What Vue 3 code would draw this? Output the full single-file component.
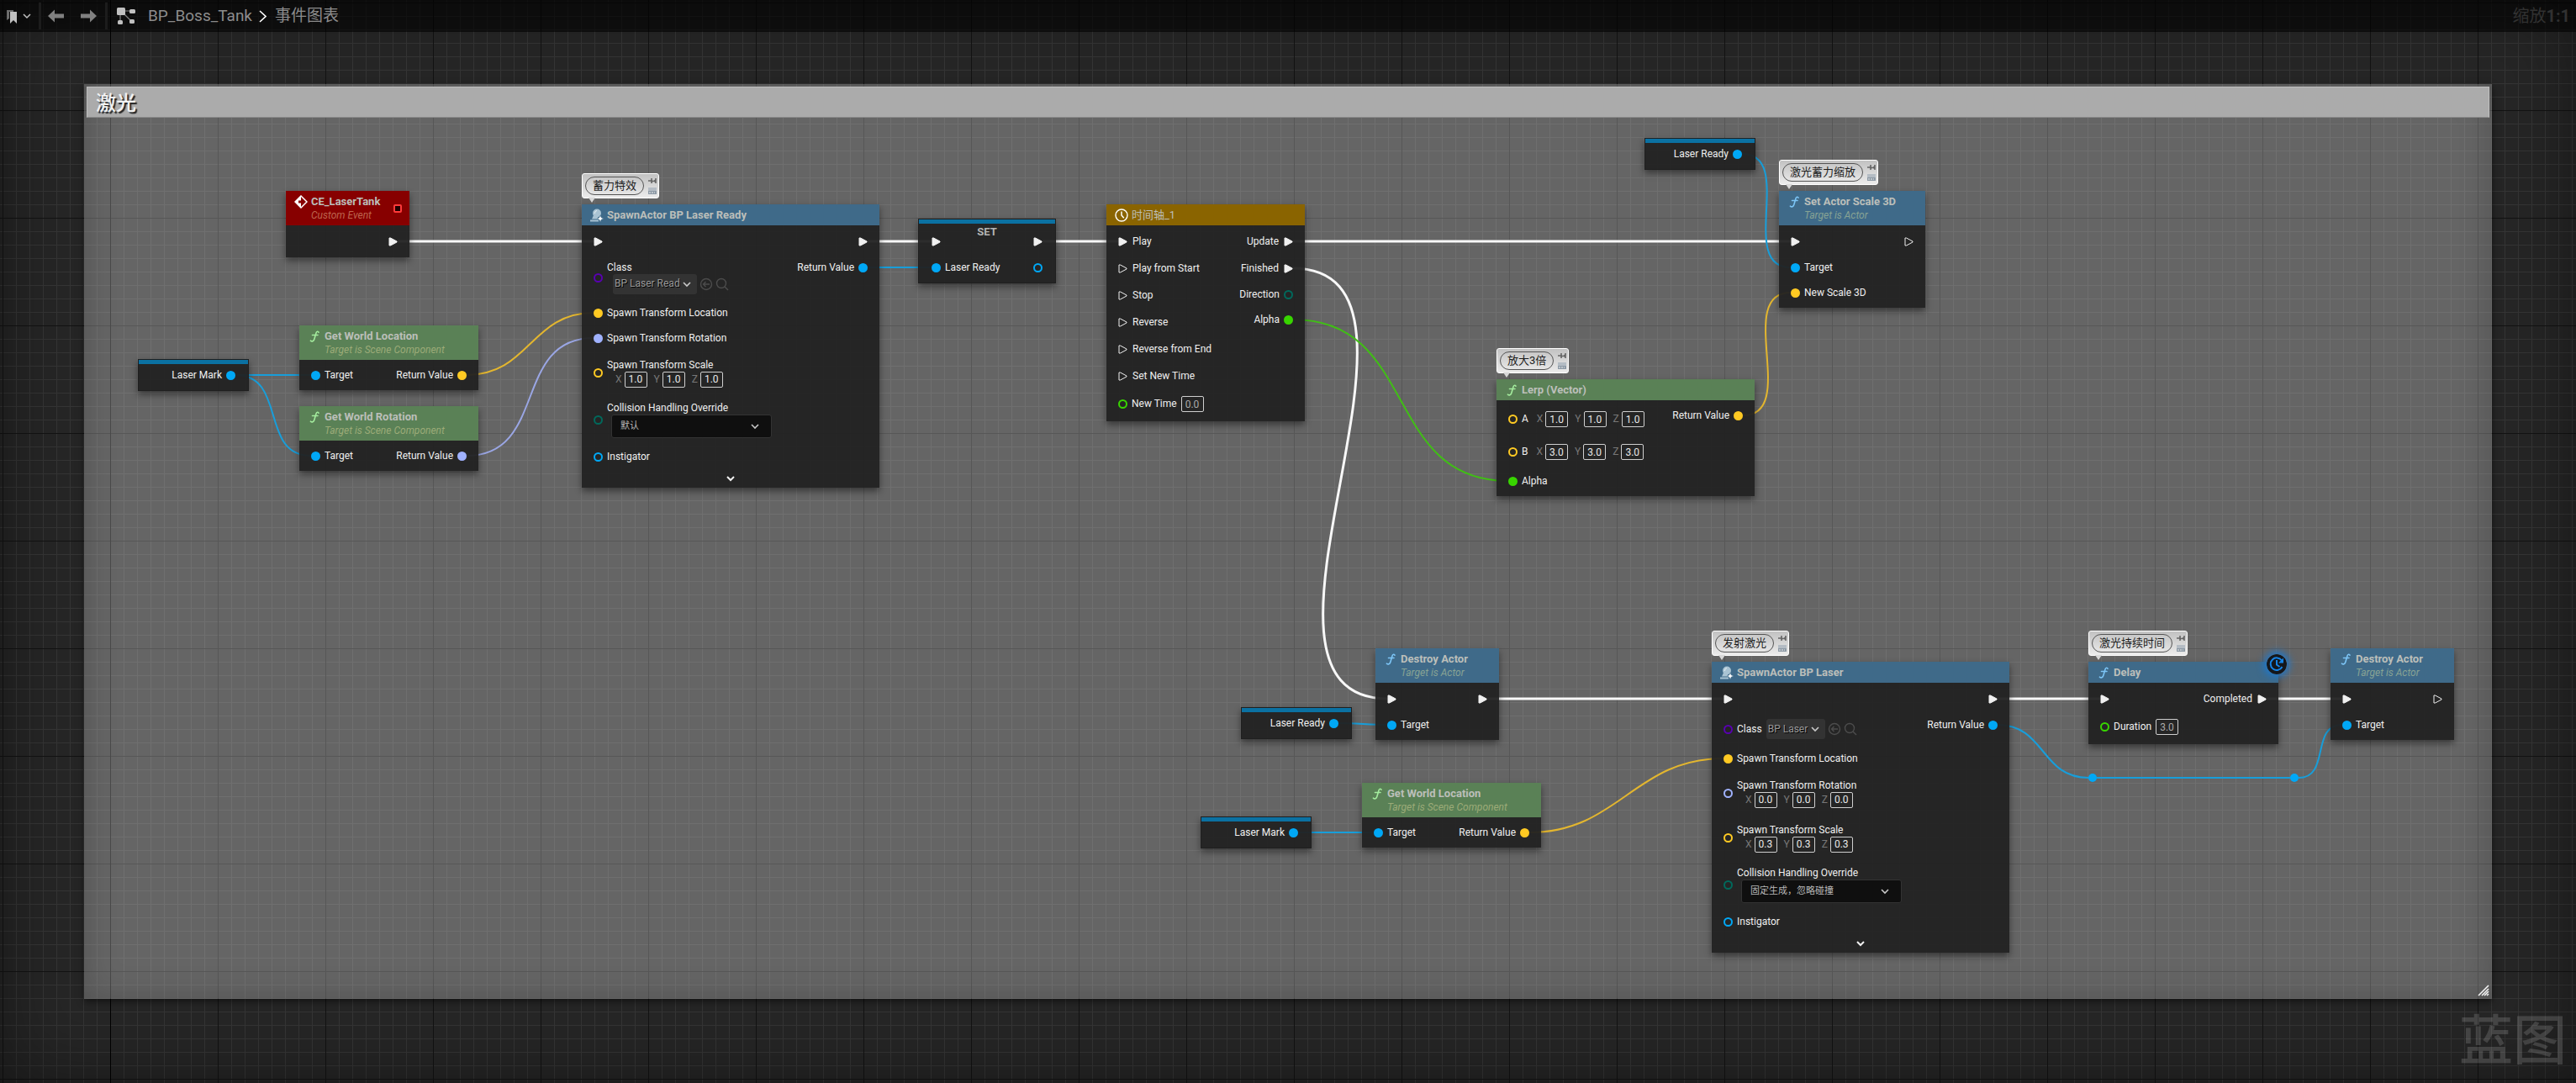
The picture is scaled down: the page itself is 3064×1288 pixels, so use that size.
<script setup>
import { ref } from 'vue';

const exec = (label = '', on = true) => ({ kind: 'exec', label, on });
const data = (color, label = '', on = true) => ({ kind: 'data', color, label, on });
const vec = (color, label, values, inline = false) => ({
  kind: inline ? 'inline' : 'vector',
  color,
  label,
  on: false,
  axes: ['X', 'Y', 'Z'].map((axis, i) => ({ axis, value: values[i] }))
});
const number = (label, value) => ({ kind: 'number', color: 'green', label, on: false, value });

const nodes = ref([
  {
    id: 'event', x: 340, y: 227, w: 147, theme: 'red', icon: 'event', title: 'CE_LaserTank', sub: 'Custom Event', delegate: true,
    inputs: [], outputs: [exec()]
  },
  {
    id: 'location-1', x: 356, y: 387, w: 213, theme: 'green', icon: 'func', title: 'Get World Location', sub: 'Target is Scene Component',
    inputs: [data('blue', 'Target')], outputs: [data('yellow', 'Return Value')]
  },
  {
    id: 'rotation-1', x: 356, y: 483, w: 213, theme: 'green', icon: 'func', title: 'Get World Rotation', sub: 'Target is Scene Component',
    inputs: [data('blue', 'Target')], outputs: [data('lavender', 'Return Value')]
  },
  { id: 'mark-1', x: 164, y: 427, w: 132, theme: 'variable', inputs: [], outputs: [data('blue', 'Laser Mark')] },
  {
    id: 'spawn-1', x: 692, y: 243, w: 354, theme: 'blue', icon: 'spawn', title: 'SpawnActor BP Laser Ready', note: '蓄力特效', more: true,
    inputs: [
      exec(),
      { kind: 'class', color: 'purple', label: 'Class', on: false, value: 'BP Laser Ready', stacked: true },
      data('yellow', 'Spawn Transform Location'),
      data('lavender', 'Spawn Transform Rotation'),
      vec('yellow', 'Spawn Transform Scale', ['1.0', '1.0', '1.0']),
      { kind: 'enum', color: 'teal', label: 'Collision Handling Override', on: false, value: '默认' },
      data('blue', 'Instigator', false)
    ],
    outputs: [exec(), data('blue', 'Return Value')]
  },
  {
    id: 'set', x: 1092, y: 260, w: 164, theme: 'variable setter', caption: 'SET',
    inputs: [exec(), data('blue', 'Laser Ready')], outputs: [exec(), data('blue', '', false)]
  },
  {
    id: 'timeline', x: 1316, y: 243, w: 236, theme: 'gold', icon: 'clock', title: '时间轴_1',
    inputs: [
      exec('Play'),
      exec('Play from Start', false),
      exec('Stop', false),
      exec('Reverse', false),
      exec('Reverse from End', false),
      exec('Set New Time', false),
      number('New Time', '0.0')
    ],
    outputs: [exec('Update'), exec('Finished'), data('teal', 'Direction', false), data('green', 'Alpha')]
  },
  { id: 'ready-1', x: 1956, y: 164, w: 132, theme: 'variable', inputs: [], outputs: [data('blue', 'Laser Ready')] },
  {
    id: 'scale', x: 2116, y: 227, w: 174, theme: 'blue', icon: 'func', title: 'Set Actor Scale 3D', sub: 'Target is Actor', note: '激光蓄力缩放',
    inputs: [exec(), data('blue', 'Target'), data('yellow', 'New Scale 3D')], outputs: [exec('', false)]
  },
  {
    id: 'lerp', x: 1780, y: 451, w: 307, theme: 'green', icon: 'func', title: 'Lerp (Vector)', note: '放大3倍',
    inputs: [
      vec('yellow', 'A', ['1.0', '1.0', '1.0'], true),
      vec('yellow', 'B', ['3.0', '3.0', '3.0'], true),
      data('green', 'Alpha')
    ],
    outputs: [data('yellow', 'Return Value')]
  },
  {
    id: 'destroy-1', x: 1636, y: 771, w: 147, theme: 'blue', icon: 'func', title: 'Destroy Actor', sub: 'Target is Actor',
    inputs: [exec(), data('blue', 'Target')], outputs: [exec()]
  },
  { id: 'ready-2', x: 1476, y: 841, w: 132, theme: 'variable', inputs: [], outputs: [data('blue', 'Laser Ready')] },
  { id: 'mark-2', x: 1428, y: 971, w: 132, theme: 'variable', inputs: [], outputs: [data('blue', 'Laser Mark')] },
  {
    id: 'location-2', x: 1620, y: 931, w: 213, theme: 'green', icon: 'func', title: 'Get World Location', sub: 'Target is Scene Component',
    inputs: [data('blue', 'Target')], outputs: [data('yellow', 'Return Value')]
  },
  {
    id: 'spawn-2', x: 2036, y: 787, w: 354, theme: 'blue', icon: 'spawn', title: 'SpawnActor BP Laser', note: '发射激光', more: true,
    inputs: [
      exec(),
      { kind: 'class', color: 'purple', label: 'Class', on: false, value: 'BP Laser' },
      data('yellow', 'Spawn Transform Location'),
      vec('lavender', 'Spawn Transform Rotation', ['0.0', '0.0', '0.0']),
      vec('yellow', 'Spawn Transform Scale', ['0.3', '0.3', '0.3']),
      { kind: 'enum', color: 'teal', label: 'Collision Handling Override', on: false, value: '固定生成，忽略碰撞' },
      data('blue', 'Instigator', false)
    ],
    outputs: [exec(), data('blue', 'Return Value')]
  },
  {
    id: 'delay', x: 2484, y: 787, w: 226, theme: 'blue', icon: 'func', title: 'Delay', note: '激光持续时间', latent: true,
    inputs: [exec(), number('Duration', '3.0')], outputs: [exec('Completed')]
  },
  {
    id: 'destroy-2', x: 2772, y: 771, w: 147, theme: 'blue', icon: 'func', title: 'Destroy Actor', sub: 'Target is Actor',
    inputs: [exec(), data('blue', 'Target')], outputs: [exec('', false)]
  }
]);

const wires = [
  ['white', 472, 287, 707, 287],
  ['white', 1031, 287, 1109, 287],
  ['white', 1240, 287, 1331, 287],
  ['white', 1537, 287, 2131, 287],
  ['white', 1537, 319, 1651, 831],
  ['white', 1768, 831, 2051, 831],
  ['white', 2375, 831, 2499, 831],
  ['white', 2695, 831, 2787, 831],
  ['blue', 280, 446, 370, 446],
  ['blue', 280, 446, 370, 542],
  ['yellow', 555, 446, 706, 372],
  ['lavender', 555, 542, 706, 402],
  ['blue', 1032, 318, 1108, 318],
  ['green', 1538, 380, 1794, 572],
  ['blue', 2072, 183, 2130, 318],
  ['yellow', 2073, 494, 2130, 348],
  ['blue', 1592, 860, 1650, 862],
  ['blue', 1544, 990, 1634, 990],
  ['yellow', 1819, 990, 2050, 902],
  ['blue', 2376, 862, 2484, 925],
  ['blue', 2494, 925, 2724, 925],
  ['blue', 2734, 925, 2786, 862]
];

const knots = [{ x: 2489, y: 925 }, { x: 2729, y: 925 }];

// tangent grows with the distance on both axes
function wirePath([, x1, y1, x2, y2]) {
  const t = (Math.abs(x2 - x1) + Math.abs(y2 - y1)) / 3;
  return `M${x1} ${y1} C${x1 + t} ${y1} ${x2 - t} ${y2} ${x2} ${y2}`;
}
</script>

<template>
  <main class="editor">
    <div class="graph">
      <section class="comment">
        <h1>激光</h1>
        <svg class="grip" viewBox="0 0 14 14" aria-hidden="true">
          <path d="M1 13L13 1M5 13l8-8M8 13l5-5M11 13l2-2" />
        </svg>
      </section>
      <div class="vignette"></div>

      <svg class="wires" aria-hidden="true">
        <path v-for="(wire, i) in wires" :key="i" :class="wire[0]" :d="wirePath(wire)" />
        <circle v-for="knot in knots" :key="knot.x" :cx="knot.x" :cy="knot.y" r="5" />
      </svg>

      <article
        v-for="node in nodes"
        :key="node.id"
        class="node"
        :class="node.theme"
        :style="{ left: node.x + 'px', top: node.y + 'px', width: node.w + 'px' }"
      >
        <div v-if="node.note" class="note">
          <span class="note-text">{{ node.note }}</span>
          <span class="note-tools">
            <svg viewBox="0 0 10 10" aria-hidden="true">
              <path d="M0 5h4M4 2v6M9 2v6" fill="none" stroke="#666" stroke-width="1.6" />
              <path d="M4 4l2 1 3-2v4L6 6 4 7z" fill="#666" />
            </svg>
            <svg viewBox="0 0 10 10" aria-hidden="true">
              <path d="M0 1h10v8H0z" fill="#b4bcc4" />
              <path d="M0 5h10v4H0z" fill="#8d9aa6" />
              <path d="M1 7h2M4 7h2M7 7h1" stroke="#eee" stroke-width="1" />
            </svg>
          </span>
        </div>

        <header v-if="node.title" class="node-head">
          <svg v-if="node.icon === 'func'" class="head-icon func" viewBox="0 0 16 16" aria-hidden="true">
            <path d="M13 3.2C12.6 1.8 10.6 1.8 10 4L7.8 11.5C7.2 13.8 5 14.6 3.4 13.2M5.5 6.5h6.5" />
          </svg>
          <svg v-else-if="node.icon === 'event'" class="head-icon" viewBox="0 0 16 16" aria-hidden="true">
            <path d="M8 1l7 7-7 7-7-7z" fill="none" stroke="#fff" stroke-width="1.5" />
            <path d="M8 1L1 8l7 7z" fill="#fff" />
            <path d="M5 6.500h3V4l4 4-4 4V9.500H5z" fill="#870000" />
          </svg>
          <svg v-else-if="node.icon === 'spawn'" class="head-icon" viewBox="0 0 16 16" aria-hidden="true">
            <circle cx="8" cy="5.5" r="5" fill="#a9c3d3" />
            <path d="M5.500 6a3 3 0 0 1 2.500-3.500" fill="none" stroke="#e6eef2" />
            <path d="M4 8L2 12.500h7V10z" fill="#a9c3d3" />
            <path d="M0 14.500h10" stroke="#a9c3d3" stroke-width="2" />
            <path d="M12 8l1.200 2.800L16 12l-2.800 1.200L12 16l-1.200-2.800L8 12l2.800-1.200z" fill="#fff" stroke="#3f6a89" stroke-width=".5" />
          </svg>
          <svg v-else class="head-icon" viewBox="0 0 16 16" aria-hidden="true">
            <circle cx="8" cy="8" r="7" fill="none" stroke="#fff" stroke-width="1.4" />
            <path d="M8 3.500V8l2.800 3.200" fill="none" stroke="#fff" stroke-width="1.5" />
          </svg>
          <div class="head-text">
            <h2>{{ node.title }}</h2>
            <p v-if="node.sub">{{ node.sub }}</p>
          </div>
          <span v-if="node.delegate" class="delegate"></span>
        </header>
        <h2 v-if="node.caption" class="caption">{{ node.caption }}</h2>

        <div class="node-body">
          <div
            v-for="side in ['inputs', 'outputs']"
            :key="side"
            class="column"
            :class="side"
          >
            <div
              v-for="(pin, i) in node[side]"
              :key="i"
              class="row"
              :class="[pin.kind, { stacked: pin.stacked }]"
            >
              <svg v-if="pin.kind === 'exec'" class="pin" :class="{ on: pin.on }" viewBox="0 0 11 11" aria-hidden="true">
                <path d="M1 1v9h1.500L10 6V5L2.500 1z" />
              </svg>
              <svg v-else class="pin round" :class="[pin.color, { on: pin.on }]" viewBox="0 0 11 11" aria-hidden="true">
                <circle cx="5.5" cy="5.5" r="4.5" />
              </svg>

              <div class="pin-content">
                <label v-if="pin.value" :for="`${node.id}-${i}`">{{ pin.label }}</label>
                <span v-else-if="pin.label">{{ pin.label }}</span>

                <div v-if="pin.axes" class="axes">
                  <label v-for="a in pin.axes" :key="a.axis">
                    {{ a.axis }}
                    <input v-model="a.value" type="text" />
                  </label>
                </div>

                <input v-if="pin.kind === 'number'" :id="`${node.id}-${i}`" v-model="pin.value" class="dim" type="text" />

                <div v-if="pin.kind === 'class'" class="picker">
                  <span class="select">
                    <select :id="`${node.id}-${i}`">
                      <option>{{ pin.value }}</option>
                    </select>
                    <svg viewBox="0 0 10 10" aria-hidden="true"><path d="M1 3l4 4 4-4" /></svg>
                  </span>
                  <button type="button" aria-label="Use selected asset">
                    <svg viewBox="0 0 16 16" aria-hidden="true">
                      <circle cx="8" cy="8" r="6.5" />
                      <path d="M12 8H5M7.500 5L4.500 8l3 3" />
                    </svg>
                  </button>
                  <button type="button" aria-label="Browse">
                    <svg viewBox="0 0 16 16" aria-hidden="true">
                      <circle cx="7" cy="7" r="5.5" />
                      <path d="M11 11l4 4" />
                    </svg>
                  </button>
                </div>

                <span v-if="pin.kind === 'enum'" class="select">
                  <select :id="`${node.id}-${i}`">
                    <option>{{ pin.value }}</option>
                  </select>
                  <svg viewBox="0 0 10 10" aria-hidden="true"><path d="M1 3l4 4 4-4" /></svg>
                </span>
              </div>
            </div>
          </div>
        </div>

        <button v-if="node.more" class="more" type="button" aria-label="Show advanced pins">
          <svg viewBox="0 0 10 10" aria-hidden="true"><path d="M1 3l4 4 4-4" /></svg>
        </button>

        <svg v-if="node.latent" class="latent" viewBox="0 0 24 24" aria-hidden="true">
          <circle cx="12" cy="12" r="12" fill="#14171c" />
          <path d="M18 7.500A7.300 7.300 0 1 0 18.500 15" fill="none" stroke="#1583e6" stroke-width="2" />
          <path d="M20 4.500v6h-6z" fill="#1583e6" />
          <path d="M12 7v5.500l3.500 2.500" fill="none" stroke="#1583e6" stroke-width="2" />
        </svg>
      </article>

      <div class="watermark">蓝图</div>
    </div>

    <nav class="toolbar">
      <button class="bookmark" type="button" aria-label="Bookmarks">
        <svg width="12" height="17" viewBox="0 0 12 17" aria-hidden="true">
          <path d="M0 1h8v2H3v8l-3 2z" fill="#6c6c6c" />
          <path d="M4 3h8v14l-4-4-4 4z" fill="#c0c0c0" />
        </svg>
        <svg width="10" height="10" viewBox="0 0 10 10" aria-hidden="true">
          <path d="M1 3l4 4 4-4" fill="none" stroke="#c0c0c0" stroke-width="1.5" />
        </svg>
      </button>
      <span class="divider"></span>
      <button type="button" aria-label="Back">
        <svg width="19" height="16" viewBox="0 0 19 16" aria-hidden="true">
          <path d="M0 8l8-7.500V5.500h11v5H8v5z" fill="#808080" />
        </svg>
      </button>
      <button type="button" aria-label="Forward">
        <svg width="19" height="16" viewBox="0 0 19 16" aria-hidden="true">
          <path d="M19 8l-8-7.500V5.500H0v5h11v5z" fill="#808080" />
        </svg>
      </button>
      <span class="divider"></span>
      <svg class="graph-icon" width="22" height="20" viewBox="0 0 22 20" aria-hidden="true">
        <path d="M5 4h13M4 5v12M7 6l11 11" stroke="#808080" stroke-width="1.2" />
        <rect width="10" height="9" rx="1.5" fill="#c0c0c0" />
        <rect x="15" y="2" width="7" height="5" rx="1.5" fill="#c0c0c0" />
        <rect x="1" y="15" width="6" height="5" rx="1.5" fill="#c0c0c0" />
        <rect x="15" y="14" width="6" height="5" rx="1.5" fill="#c0c0c0" />
      </svg>
      <a href="#">BP_Boss_Tank</a>
      <svg class="crumb" width="9" height="15" viewBox="0 0 9 15" aria-hidden="true">
        <path d="M1 1l7 6.500L1 14" fill="none" stroke="#fff" stroke-width="1.6" />
      </svg>
      <a href="#">事件图表</a>
      <span class="zoom">缩放<b>1:1</b></span>
    </nav>
  </main>
</template>

<style>
body {
  margin: 0;
  background: #262626;
}
</style>

<style scoped>
.editor {
  position: relative;
  height: 100vh;
  overflow: hidden;
  font-family: Roboto, "Noto Sans CJK SC", sans-serif;
  font-size: 12px;
  line-height: 15px;
  color: #f0f0f0;
}

h1,
h2,
p {
  margin: 0;
  font-size: inherit;
}

button {
  display: flex;
  align-items: center;
  padding: 0;
  border: none;
  background: none;
}

input,
select {
  box-sizing: border-box;
  margin: 0;
  font: inherit;
  color: inherit;
  outline: none;
}

/* graph surface */
.graph {
  position: relative;
  height: 100%;
  background:
    linear-gradient(#000, #000) 131px 0 / 1px 100% no-repeat,
    linear-gradient(90deg, #131313 1px, transparent 1px) 3px 0 / 128px 128px,
    linear-gradient(#131313 1px, transparent 1px) 0 3px / 128px 128px,
    linear-gradient(90deg, #353535 1px, transparent 1px) 3px 0 / 16px 16px,
    linear-gradient(#353535 1px, transparent 1px) 0 3px / 16px 16px,
    #262626;
}

.vignette {
  position: absolute;
  inset: 0;
  box-shadow: inset 0 0 90px rgba(0, 0, 0, 0.45);
}

.comment {
  position: absolute;
  top: 100px;
  right: 100px;
  bottom: 100px;
  left: 100px;
  box-sizing: border-box;
  padding: 3px;
  background: rgba(255, 255, 255, 0.29);
  box-shadow: 0 3px 8px rgba(0, 0, 0, 0.5), inset 0 0 40px rgba(0, 0, 0, 0.2);
}

.comment h1 {
  position: relative;
  z-index: 1;
  box-sizing: border-box;
  height: 37px;
  padding-left: 10px;
  border: 1px solid #c0c0c0;
  border-bottom-color: #8a8a8a;
  background: #ababab;
  font-size: 24px;
  font-weight: 500;
  line-height: 38px;
  color: #f2f2f2;
  text-shadow: 2px 2px 1px #222;
}

.grip {
  position: absolute;
  right: 3px;
  bottom: 3px;
  width: 14px;
  height: 14px;
  fill: none;
  stroke: #f4f4f4;
  stroke-width: 1.6;
}

.wires {
  position: absolute;
  inset: 0;
  width: 100%;
  height: 100%;
  fill: none;
  stroke-width: 2;
}

.wires .white {
  stroke: #f8f8f8;
  stroke-width: 3;
}

.wires .blue {
  stroke: #189eda;
}

.wires .yellow {
  stroke: #e3b62f;
}

.wires .lavender {
  stroke: #9aa6e4;
}

.wires .green {
  stroke: #40bf15;
}

.wires circle {
  fill: #00a8f6;
}

/* nodes */
.node {
  position: absolute;
  background: rgba(34, 34, 34, 0.95);
  box-shadow: 0 4px 8px rgba(0, 0, 0, 0.45);
}

.node-head {
  display: flex;
  gap: 4px;
  padding: 5px 10px 4px;
}

.red .node-head {
  background: #870000;
}

.green .node-head {
  background: #5a8156;
}

.blue .node-head {
  background: #3f6a89;
}

.gold .node-head {
  background: #8a6400;
}

.head-icon {
  width: 16px;
  height: 16px;
}

.func {
  fill: none;
  stroke: #a3eb9d;
  stroke-width: 1.6;
  stroke-linecap: round;
}

.blue .func {
  stroke: #7cc4f5;
}

.head-text {
  flex: 1;
}

.head-text h2 {
  font-size: 13px;
  font-weight: 700;
  line-height: 16px;
  color: #bcbfba;
}

.head-text p {
  padding-top: 1px;
  font-style: italic;
  color: #9cab78;
}

.gold .head-text h2 {
  font-weight: 400;
}

.red .head-text p {
  color: #bd654e;
}

.blue .head-text p {
  color: #87a394;
}

.delegate {
  align-self: center;
  box-sizing: border-box;
  width: 10px;
  height: 10px;
  margin-right: -1px;
  border: 2px solid #ff3a3a;
  border-radius: 2px;
  background: #200;
}

.node-body {
  display: flex;
  justify-content: space-between;
  padding: 3px 14px;
}

.row {
  display: flex;
  align-items: center;
  gap: 5px;
  min-height: 30px;
}

.row.exec {
  min-height: 32px;
}

.row.number {
  min-height: 35px;
}

.row.inline {
  min-height: 39px;
}

.row.class {
  min-height: 40px;
}

.row.vector {
  min-height: 53px;
}

.row.class.stacked {
  min-height: 54px;
}

.row.enum {
  min-height: 58px;
}

.outputs .row {
  flex-direction: row-reverse;
}

.pin {
  width: 11px;
  height: 11px;
  fill: none;
  stroke: #f0f0f0;
}

.pin.on {
  fill: #f0f0f0;
}

.pin.round {
  stroke: currentColor;
  stroke-width: 2;
}

.pin.round.on {
  fill: currentColor;
}

.pin.blue {
  color: #00a8f6;
}

.pin.yellow {
  color: #ffca23;
}

.pin.lavender {
  color: #a0b2ff;
}

.pin.green {
  color: #38d500;
}

.pin.teal {
  color: #00695c;
}

.pin.purple {
  color: #5800b0;
}

.pin-content {
  display: flex;
  align-items: center;
  gap: 5px;
}

.exec .pin-content {
  padding: 0 1px;
}

.inline .pin-content {
  gap: 10px;
}

.vector .pin-content,
.enum .pin-content,
.stacked .pin-content {
  flex-direction: column;
  align-items: flex-start;
  gap: 0;
}

.axes {
  display: flex;
  gap: 8px;
}

.axes label {
  display: flex;
  align-items: center;
  gap: 3px;
  color: #777;
}

.vector .axes {
  padding-left: 10px;
}

input {
  width: 27px;
  height: 19px;
  padding: 0 0 0 4px;
  border: 1px solid #cfcfcf;
  border-radius: 2px;
  background: transparent;
  color: #e8e8e8;
}

input.dim {
  color: #aaa;
}

.picker {
  display: flex;
  align-items: center;
  gap: 3px;
}

.stacked .picker {
  padding-left: 7px;
}

.picker button svg {
  width: 16px;
  height: 16px;
  fill: none;
  stroke: #4c4c4c;
  stroke-width: 1.4;
}

.select {
  display: grid;
  align-items: center;
}

.select select,
.select svg {
  grid-area: 1 / 1;
}

.select svg,
.more svg {
  justify-self: end;
  width: 10px;
  height: 10px;
  fill: none;
  stroke: #c8c8c8;
  stroke-width: 1.6;
  pointer-events: none;
}

.select select {
  appearance: none;
  border: none;
  border-radius: 3px;
}

.picker select {
  max-width: 100px;
  height: 24px;
  padding: 0 20px 0 2px;
  background: #333;
  color: #999;
  text-shadow: 1px 1px 0 #000;
}

.picker .select svg {
  margin-right: 7px;
}

.enum .select {
  margin-left: 5px;
}

.enum select {
  width: 191px;
  height: 28px;
  padding: 0 30px 0 10px;
  border: 1px solid #333;
  background: #0f0f0f;
  font-size: 11px;
  color: #b8b8b8;
}

.enum .select svg {
  margin-right: 15px;
}

.more {
  justify-content: center;
  width: 100%;
  height: 22px;
  margin-top: -3px;
}

.more svg {
  stroke: #f0f0f0;
  stroke-width: 2;
}

/* variable nodes have a coloured strip in place of a header */
.variable {
  box-sizing: border-box;
  border: 1px solid #1f1f1f;
}

.variable::before {
  content: "";
  position: absolute;
  inset: 0 0 auto;
  height: 5px;
  background: #0b71a2;
}

.variable .node-body {
  padding: 3px 15px;
}

.setter .node-body {
  padding-top: 10px;
}

.caption {
  position: absolute;
  top: 7px;
  width: 100%;
  text-align: center;
  font-size: 13px;
  color: #b4b4b4;
}

/* comment bubble above a node */
.note {
  position: absolute;
  bottom: calc(100% + 7px);
  left: 0;
  display: flex;
  gap: 5px;
  box-sizing: border-box;
  height: 30px;
  padding: 3px 2px 3px 3px;
  border: 1px solid #fff;
  border-radius: 3px;
  background: linear-gradient(#c2c2c2, #ececec);
  white-space: nowrap;
}

.note::after {
  content: "";
  position: absolute;
  top: 100%;
  left: 7px;
  border: 4px solid transparent;
  border-top: 6px solid #d8d8d8;
  border-bottom: none;
}

.note-text {
  padding: 0 8px;
  border: 1px solid #555;
  border-radius: 11px;
  font-size: 13px;
  line-height: 20px;
  color: #1c1c1c;
}

.note-tools {
  display: flex;
  flex-direction: column;
  gap: 2px;
}

.note-tools svg {
  width: 10px;
  height: 10px;
}

.latent {
  position: absolute;
  top: -9px;
  right: -10px;
  width: 24px;
  height: 24px;
  border-radius: 50%;
  box-shadow: 0 0 10px 3px #1a78d0;
}

.watermark {
  position: absolute;
  right: 11px;
  bottom: 14px;
  font-size: 64px;
  font-weight: 500;
  line-height: 70px;
  color: rgba(255, 255, 255, 0.15);
}

/* toolbar over the graph */
.toolbar {
  position: absolute;
  inset: 0 0 auto;
  display: flex;
  align-items: center;
  height: 38px;
  padding: 0 7px 0 8px;
  box-sizing: border-box;
  background: rgba(0, 0, 0, 0.6);
  font-size: 19px;
  line-height: 24px;
}

.toolbar > button {
  margin-right: 20px;
}

.toolbar .bookmark {
  gap: 7px;
  margin-right: 9px;
}

.divider {
  width: 3px;
  height: 32px;
  margin-right: 8px;
  background: #1c1c1c;
}

.toolbar > button + .divider {
  margin-left: -10px;
}

.toolbar > .bookmark + .divider {
  margin-left: 0;
}

.graph-icon {
  margin: 0 15px 0 3px;
}

.toolbar a {
  color: #8c8c8c;
  text-decoration: none;
}

.crumb {
  margin: 0 10px 0 8px;
}

.zoom {
  margin-left: auto;
  font-size: 20px;
  color: #313131;
}
</style>
